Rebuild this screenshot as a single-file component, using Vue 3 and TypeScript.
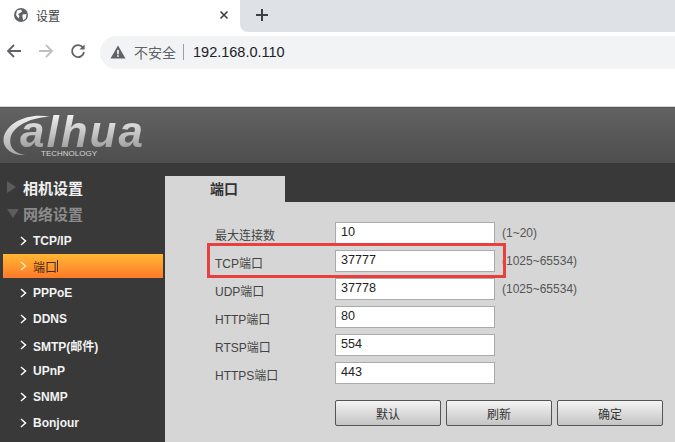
<script setup lang="ts">
const menuItems = [
  { label: "TCP/IP", active: false },
  { label: "端口", active: true },
  { label: "PPPoE", active: false },
  { label: "DDNS", active: false },
  { label: "SMTP(邮件)", active: false },
  { label: "UPnP", active: false },
  { label: "SNMP", active: false },
  { label: "Bonjour", active: false },
];

const fields = [
  { label: "最大连接数", value: "10", hint: "(1~20)" },
  { label: "TCP端口", value: "37777", hint: "(1025~65534)" },
  { label: "UDP端口", value: "37778", hint: "(1025~65534)" },
  { label: "HTTP端口", value: "80", hint: "" },
  { label: "RTSP端口", value: "554", hint: "" },
  { label: "HTTPS端口", value: "443", hint: "" },
];

const buttons = ["默认", "刷新", "确定"];
</script>

<template>
  <div class="page">
    <div class="tabstrip">
      <div class="tab">
        <svg class="globe" width="16" height="16" viewBox="0 0 16 16">
          <circle cx="8" cy="8" r="7" fill="#5f6368" />
          <path d="M4 3.5 L8 2.5 L9 4.5 L7 6 L5 7 L6.5 9 L5.5 11.5 L3 8 Z M9.5 7.5 L13.5 7 L13 11 L10.5 13.5 L9.5 10.5 Z" fill="#fff" />
        </svg>
        <span class="tab-title">设置</span>
        <svg class="close" width="10" height="10" viewBox="0 0 10 10">
          <path d="M1.5 1.5 L8.5 8.5 M8.5 1.5 L1.5 8.5" stroke="#3c4043" stroke-width="1.6" />
        </svg>
      </div>
      <div class="tab-rest">
        <svg width="14" height="14" viewBox="0 0 14 14">
          <path d="M7 1 V13 M1 7 H13" stroke="#3c4043" stroke-width="2" />
        </svg>
      </div>
    </div>

    <div class="toolbar">
      <svg class="nav first" width="16" height="16" viewBox="0 0 16 16">
        <path d="M15 8 H2 M8 2 L2 8 L8 14" fill="none" stroke="#5f6368" stroke-width="1.8" />
      </svg>
      <svg class="nav" width="16" height="16" viewBox="0 0 16 16">
        <path d="M1 8 H14 M8 2 L14 8 L8 14" fill="none" stroke="#bdc1c6" stroke-width="1.8" />
      </svg>
      <svg class="nav" width="16" height="16" viewBox="0 0 16 16">
        <path d="M13.2 5 A6 6 0 1 0 14 9" fill="none" stroke="#5f6368" stroke-width="1.8" />
        <path d="M14.6 1.4 V6.6 H9.4 Z" fill="#5f6368" />
      </svg>
      <div class="omnibox">
        <svg width="16" height="14" viewBox="0 0 16 14">
          <path d="M8 0.5 L15.5 13.5 H0.5 Z" fill="#5f6368" />
          <path d="M7.2 5 H8.8 V9.2 H7.2 Z M7.2 10.2 H8.8 V11.8 H7.2 Z" fill="#fff" />
        </svg>
        <span class="insecure">不安全</span>
        <span class="divider"></span>
        <span class="url">192.168.0.110</span>
      </div>
    </div>

    <div class="gap"></div>

    <header class="banner">
      <div class="logo">
        <svg class="logo-ring" width="60" height="55" viewBox="0 0 60 55">
          <defs>
            <linearGradient id="ringFill" x1="0" y1="0" x2="0" y2="1">
              <stop offset="0" stop-color="#f0f0f0" />
              <stop offset="1" stop-color="#a8a8a8" />
            </linearGradient>
          </defs>
          <path d="M50 9 C30 4 8 14 4 28 C1 40 12 48 26 47 C14 46 8 38 11 28 C15 17 32 9 50 9 Z" fill="url(#ringFill)" />
        </svg>
        <span class="logo-text">alhua</span>
        <span class="logo-sub">TECHNOLOGY</span>
      </div>
    </header>

    <div class="body">
      <aside class="sidebar">
        <div class="group group-open">
          <span class="tri-right"></span>
          <span>相机设置</span>
        </div>
        <div class="group group-dim">
          <span class="tri-down"></span>
          <span>网络设置</span>
        </div>
        <ul class="menu">
          <li v-for="item in menuItems" :key="item.label" :class="['menu-item', { active: item.active }]">
            <svg class="chevron" width="7" height="10" viewBox="0 0 7 10">
              <path d="M1 1 L5.5 5 L1 9" fill="none" stroke="currentColor" stroke-width="1.5" />
            </svg>
            <span>{{ item.label }}</span>
            <span v-if="item.active" class="caret"></span>
          </li>
        </ul>
      </aside>

      <main class="content">
        <div class="tabs">
          <div class="content-tab">端口</div>
        </div>
        <div class="panel">
          <div class="form">
            <div v-for="field in fields" :key="field.label" class="row">
              <label class="row-label">{{ field.label }}</label>
              <div class="row-input">{{ field.value }}</div>
              <span class="row-hint">{{ field.hint }}</span>
            </div>
          </div>
          <div class="actions">
            <button v-for="b in buttons" :key="b" class="btn">{{ b }}</button>
          </div>
          <div class="highlight"></div>
        </div>
      </main>
    </div>
  </div>
</template>

<style scoped>
.page {
  width: 675px;
  height: 442px;
  overflow: hidden;
  background: #fff;
  font-family: "Liberation Sans", "Noto Sans CJK SC", sans-serif;
  display: flex;
  flex-direction: column;
}

.tabstrip {
  height: 32px;
  display: flex;
  flex-shrink: 0;
}

.tab {
  width: 240px;
  background: #fff;
  display: flex;
  align-items: center;
  padding: 0 11px 2px 13px;
  box-sizing: border-box;
}

.tab-title {
  margin-left: 7px;
  font-size: 12px;
  color: #3c4043;
  flex: 1;
}

.tab-rest {
  flex: 1;
  background: #dee1e6;
  border-bottom-left-radius: 8px;
  padding: 8px 0 0 15px;
  box-sizing: border-box;
}

.toolbar {
  height: 38px;
  display: flex;
  align-items: center;
  flex-shrink: 0;
}

.nav {
  margin-left: 16px;
}

.nav.first {
  margin-left: 6px;
}

.omnibox {
  margin: 2px 0 0 14px;
  flex: 1;
  height: 32px;
  border-radius: 17px 0 0 17px;
  background: #f1f3f4;
  border-bottom: 1px solid #f4f4f4;
  display: flex;
  align-items: center;
  padding-left: 10px;
}

.insecure {
  margin-left: 8px;
  font-size: 14px;
  color: #5f6368;
}

.divider {
  width: 1px;
  height: 16px;
  background: #9aa0a6;
  margin: 0 9px 0 7px;
}

.url {
  font-size: 14.5px;
  color: #202124;
}

.gap {
  height: 37px;
  flex-shrink: 0;
  box-sizing: border-box;
  border-bottom: 1px solid #d8d8d8;
}

.banner {
  height: 56px;
  flex-shrink: 0;
  background: linear-gradient(#626262, #4e4e4e);
  border-top: 1px solid #555;
  box-sizing: border-box;
}

.logo {
  position: relative;
  width: 150px;
  height: 55px;
}

.logo-ring {
  position: absolute;
  left: 0;
  top: 0;
}

.logo-text {
  position: absolute;
  left: 20px;
  top: 6px;
  font-size: 44px;
  line-height: 36px;
  font-weight: 700;
  font-style: italic;
  letter-spacing: 2px;
  background: linear-gradient(#f2f2f2, #9c9c9c);
  -webkit-background-clip: text;
  background-clip: text;
  color: transparent;
}

.logo-sub {
  position: absolute;
  left: 41px;
  top: 42px;
  font-size: 8px;
  line-height: 8px;
  color: #d5d5d5;
}

.body {
  flex: 1;
  display: flex;
  min-height: 0;
}

.sidebar {
  width: 165px;
  flex-shrink: 0;
  background: #393939;
  padding-top: 11px;
  box-sizing: border-box;
}

.group {
  height: 26px;
  display: flex;
  align-items: center;
  padding-left: 7px;
  font-size: 15px;
  font-weight: 700;
}

.group-open {
  color: #f0f0f0;
}

.group-dim {
  color: #8b8b8b;
}

.tri-right {
  width: 0;
  height: 0;
  border-left: 9px solid #5c5c5c;
  border-top: 6px solid transparent;
  border-bottom: 6px solid transparent;
  margin-right: 7px;
}

.tri-down {
  width: 0;
  height: 0;
  border-top: 9px solid #5c5c5c;
  border-left: 6px solid transparent;
  border-right: 6px solid transparent;
  margin-right: 4px;
}

.menu {
  list-style: none;
  margin: 2px 0 0;
  padding: 0;
}

.menu-item {
  height: 26px;
  margin: 0 2px 0 3px;
  padding-left: 17px;
  display: flex;
  align-items: center;
  color: #f2f2f2;
  font-size: 12px;
  font-weight: 700;
}

.menu-item .chevron {
  margin-right: 6px;
  color: #fff;
}

.menu-item.active {
  background: linear-gradient(#ffb733, #ff7a2b);
  color: #4a2a10;
  font-weight: 400;
  height: 24px;
  margin-bottom: 2px;
}

.menu-item.active .chevron {
  color: #ffe9b0;
}

.caret {
  width: 1px;
  height: 12px;
  background: #3a2a1a;
}

.content {
  flex: 1;
  display: flex;
  flex-direction: column;
  background: #393939;
  min-width: 0;
}

.tabs {
  height: 26px;
  padding-top: 13px;
  flex-shrink: 0;
  display: flex;
}

.content-tab {
  width: 120px;
  background: #d6d6d6;
  font-size: 14px;
  font-weight: 700;
  color: #333;
  padding-left: 45px;
  box-sizing: border-box;
  line-height: 26px;
}

.panel {
  position: relative;
  flex: 1;
  background: #d6d6d6;
  padding: 17px 0 0 50px;
}

.row {
  height: 28px;
  display: flex;
  align-items: center;
}

.row-label {
  width: 120px;
  font-size: 12px;
  color: #444;
  padding-top: 2px;
  box-sizing: border-box;
}

.row-input {
  width: 160px;
  height: 22px;
  box-sizing: border-box;
  background: #fff;
  border: 1px solid #aaa;
  font-size: 12.6px;
  color: #222;
  padding-left: 5px;
  line-height: 19px;
}

.row-hint {
  margin-left: 7px;
  font-size: 12px;
  color: #555;
}

.actions {
  display: flex;
  gap: 5px;
  margin: 13px 0 0 120px;
}

.btn {
  width: 106px;
  height: 26px;
  padding: 0;
  border: 1px solid #555;
  border-radius: 2px;
  background: linear-gradient(#f4f4f4, #c4c4c4);
  font-family: inherit;
  font-size: 12px;
  color: #333;
}

.highlight {
  position: absolute;
  left: 42px;
  top: 41px;
  width: 299px;
  height: 35px;
  border: 3px solid #e8403f;
  box-sizing: border-box;
  pointer-events: none;
}
</style>

<style>
html,
body {
  margin: 0;
  background: #fff;
}
</style>
